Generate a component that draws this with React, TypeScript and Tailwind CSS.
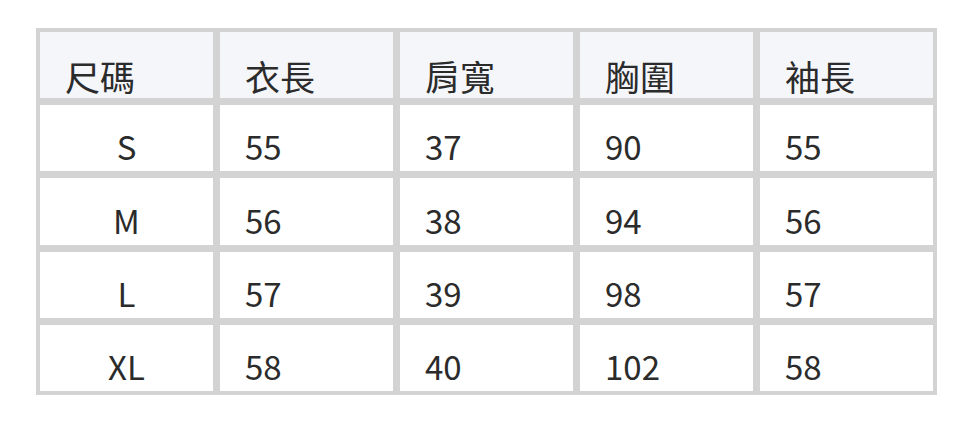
const headers = ["尺碼", "衣長", "肩寬", "胸圍", "袖長"];

const rows = [
  ["S", "55", "37", "90", "55"],
  ["M", "56", "38", "94", "56"],
  ["L", "57", "39", "98", "57"],
  ["XL", "58", "40", "102", "58"],
];

export default function App() {
  return (
    <div className="w-[972px] h-[422px] bg-white pt-[28px] pl-[36px] font-['Noto_Sans_CJK_TC','Noto_Sans',sans-serif] text-[#2b2b2b]">
      <div className="w-[901px] h-[367px] bg-[#d3d3d3] p-1 grid grid-cols-5 grid-rows-5 gap-[7px]">
        {headers.map((h, i) => (
          <div key={i} className="bg-[#f5f6fa] flex items-end pl-[25px] pb-[5px] text-[35px] leading-none">
            {h}
          </div>
        ))}
        {rows.map((r, ri) =>
          r.map((c, ci) => (
            <div
              key={`${ri}-${ci}`}
              className={`bg-white flex items-end pb-[8px] text-[33px] leading-none ${ci === 0 ? "justify-center" : "pl-[25px]"}`}
            >
              {c}
            </div>
          ))
        )}
      </div>
    </div>
  );
}
